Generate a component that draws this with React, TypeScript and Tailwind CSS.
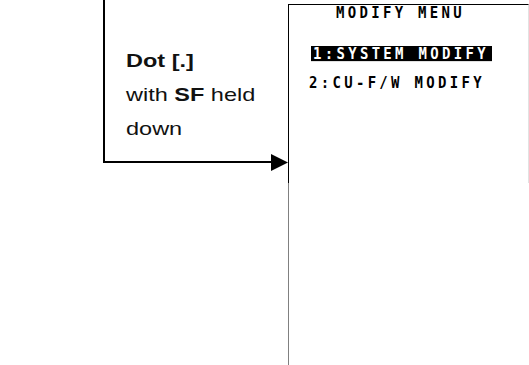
export default function App() {
  const mono = "font-['DejaVu_Sans_Mono',monospace] font-bold text-[14px] leading-[14px] tracking-[3.3px] whitespace-pre origin-top scale-y-[1.08]";

  return (
    <div className="w-[529px] h-[365px] bg-white overflow-hidden flex items-start">
      {/* left spacer */}
      <div className="w-[103px] shrink-0" />

      {/* key instruction box */}
      <div className="w-[168px] h-[163px] shrink-0 border-l-2 border-b-2 border-black pl-[21px] pt-[44px]">
        <div className="origin-left scale-x-[1.27] font-['Liberation_Sans',Arial,sans-serif] text-[18.5px] leading-[34px] text-[#111] whitespace-nowrap">
          <div className="font-bold">Dot [.]</div>
          <div>
            with <span className="font-bold">SF</span> held
          </div>
          <div>down</div>
        </div>
      </div>

      {/* arrow head */}
      <svg className="mt-[154px] shrink-0" width="17" height="17" viewBox="0 0 17 17">
        <polygon points="0,0 17,8.5 0,17" fill="#000" />
      </svg>

      {/* screen panel */}
      <div className="mt-1 w-[241px] h-[361px] shrink-0 flex flex-col">
        <div className="h-[179px] border-t border-l border-black border-r border-r-[#e2e2e2] flex flex-col">
          <div className={`${mono} h-[14px] pl-[47px] text-black`}>MODIFY MENU</div>
          <div className="mt-[21px] h-[14px] pl-[22px]">
            <span className={`${mono} inline-block h-[14px] bg-black text-white pl-[2px] pr-[3px]`}>
              1:SYSTEM MODIFY
            </span>
          </div>
          <div className={`${mono} mt-[21px] h-[14px] pl-[20px] text-black`}>2:CU-F/W MODIFY</div>
        </div>
        <div className="flex-1 border-l border-[#808080]" />
      </div>
    </div>
  );
}
